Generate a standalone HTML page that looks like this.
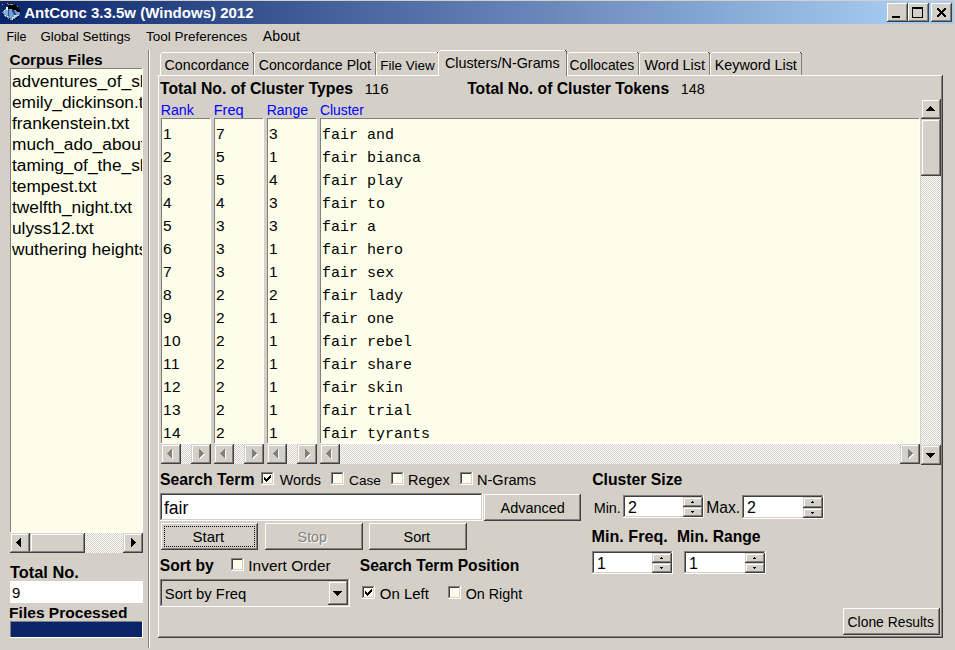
<!DOCTYPE html><html><head><meta charset="utf-8"><style>
html,body{margin:0;padding:0;}
body{width:955px;height:650px;position:relative;overflow:hidden;background:#d4d0c8;}
body div{position:absolute;}
</style></head><body>
<div style="left:0px;top:1px;width:954px;height:23px;background:linear-gradient(to right, #0a246a 0px, #a6caf0 900px)"></div>
<svg style="position:absolute;left:0px;top:0px" width="24" height="24" viewBox="0 0 24 24" shape-rendering="crispEdges">
<polygon points="2,12 6,9 10,9 14,10 19,11 20,13 20,15 16,17 13,20 11,20 6,17 2,14" fill="#6c9bd6"/>
<polygon points="3,12 6,10 9,10 9,16 6,15" fill="#87aee0"/>
<path d="M8,9h1v7h-1z M12,10h2v1h1v2h1v2h-2v-1h-1v-2h-1z" fill="#2c4a80"/>
<path d="M14,15h5v1h-2v1h-2v1h-2v1h-1v-2h2z" fill="#d8d0b8"/>
<polygon points="10,5 14,5 17,6 19,8 20,12 18,12 15,10 11,9 8,9 7,7" fill="#000"/>
<rect x="6" y="7" width="2" height="3" fill="#f0f0f0"/>
<path d="M2,4h1v1h-1z M7,3h1v1h-1z M8,4h1v1h-1z M10,4h3v1h-3z M17,6h1v1h-1z" fill="#a89870"/>
<path d="M5,4h1v1h-1z M2,13h1v1h-1z M3,14h1v1h-1z M9,18h1v1h-1z M13,19h1v1h-1z M18,17h1v1h-1z M20,12h1v1h-1z M16,18h1v1h-1z M6,17h1v1h-1z" fill="#000"/>
<path d="M5,15h1v1h-1z M7,16h1v1h-1z M12,19h1v1h-1z M4,10h1v1h-1z" fill="#e8eef8"/>
</svg>
<div style="left:24.25px;top:-2px;font-family:'Liberation Sans', sans-serif;font-weight:bold;font-size:15.02px;line-height:30px;color:#fff;white-space:nowrap;">AntConc 3.3.5w (Windows) 2012</div>
<div style="left:887px;top:3px;width:21px;height:19px;background:#d4d0c8;box-shadow:inset -1px -1px #404040, inset 1px 1px #ffffff, inset -2px -2px #808080, inset 2px 2px #d4d0c8"></div>
<div style="left:892px;top:16px;width:8px;height:2px;background:#000"></div>
<div style="left:908px;top:3px;width:21px;height:19px;background:#d4d0c8;box-shadow:inset -1px -1px #404040, inset 1px 1px #ffffff, inset -2px -2px #808080, inset 2px 2px #d4d0c8"></div>
<div style="left:912px;top:7px;width:11px;height:11px;border:1px solid #000;border-top-width:2px;box-sizing:border-box"></div>
<div style="left:931px;top:3px;width:21px;height:19px;background:#d4d0c8;box-shadow:inset -1px -1px #404040, inset 1px 1px #ffffff, inset -2px -2px #808080, inset 2px 2px #d4d0c8"></div>
<div style="left:937px;top:8px;width:1px;height:1px;background:#000"></div>
<div style="left:938px;top:8px;width:1px;height:1px;background:#000"></div>
<div style="left:944px;top:8px;width:1px;height:1px;background:#000"></div>
<div style="left:945px;top:8px;width:1px;height:1px;background:#000"></div>
<div style="left:937px;top:9px;width:1px;height:1px;background:#000"></div>
<div style="left:938px;top:9px;width:1px;height:1px;background:#000"></div>
<div style="left:939px;top:9px;width:1px;height:1px;background:#000"></div>
<div style="left:943px;top:9px;width:1px;height:1px;background:#000"></div>
<div style="left:944px;top:9px;width:1px;height:1px;background:#000"></div>
<div style="left:945px;top:9px;width:1px;height:1px;background:#000"></div>
<div style="left:938px;top:10px;width:1px;height:1px;background:#000"></div>
<div style="left:939px;top:10px;width:1px;height:1px;background:#000"></div>
<div style="left:940px;top:10px;width:1px;height:1px;background:#000"></div>
<div style="left:942px;top:10px;width:1px;height:1px;background:#000"></div>
<div style="left:943px;top:10px;width:1px;height:1px;background:#000"></div>
<div style="left:944px;top:10px;width:1px;height:1px;background:#000"></div>
<div style="left:939px;top:11px;width:1px;height:1px;background:#000"></div>
<div style="left:940px;top:11px;width:1px;height:1px;background:#000"></div>
<div style="left:941px;top:11px;width:1px;height:1px;background:#000"></div>
<div style="left:942px;top:11px;width:1px;height:1px;background:#000"></div>
<div style="left:943px;top:11px;width:1px;height:1px;background:#000"></div>
<div style="left:940px;top:12px;width:1px;height:1px;background:#000"></div>
<div style="left:941px;top:12px;width:1px;height:1px;background:#000"></div>
<div style="left:942px;top:12px;width:1px;height:1px;background:#000"></div>
<div style="left:939px;top:13px;width:1px;height:1px;background:#000"></div>
<div style="left:940px;top:13px;width:1px;height:1px;background:#000"></div>
<div style="left:941px;top:13px;width:1px;height:1px;background:#000"></div>
<div style="left:942px;top:13px;width:1px;height:1px;background:#000"></div>
<div style="left:943px;top:13px;width:1px;height:1px;background:#000"></div>
<div style="left:938px;top:14px;width:1px;height:1px;background:#000"></div>
<div style="left:939px;top:14px;width:1px;height:1px;background:#000"></div>
<div style="left:940px;top:14px;width:1px;height:1px;background:#000"></div>
<div style="left:942px;top:14px;width:1px;height:1px;background:#000"></div>
<div style="left:943px;top:14px;width:1px;height:1px;background:#000"></div>
<div style="left:944px;top:14px;width:1px;height:1px;background:#000"></div>
<div style="left:937px;top:15px;width:1px;height:1px;background:#000"></div>
<div style="left:938px;top:15px;width:1px;height:1px;background:#000"></div>
<div style="left:939px;top:15px;width:1px;height:1px;background:#000"></div>
<div style="left:943px;top:15px;width:1px;height:1px;background:#000"></div>
<div style="left:944px;top:15px;width:1px;height:1px;background:#000"></div>
<div style="left:945px;top:15px;width:1px;height:1px;background:#000"></div>
<div style="left:937px;top:16px;width:1px;height:1px;background:#000"></div>
<div style="left:938px;top:16px;width:1px;height:1px;background:#000"></div>
<div style="left:944px;top:16px;width:1px;height:1px;background:#000"></div>
<div style="left:945px;top:16px;width:1px;height:1px;background:#000"></div>
<div style="left:6.51px;top:22px;font-family:'Liberation Sans', sans-serif;font-weight:normal;font-size:12.42px;line-height:30px;color:#000;white-space:nowrap;">File</div>
<div style="left:40.44px;top:22px;font-family:'Liberation Sans', sans-serif;font-weight:normal;font-size:13.27px;line-height:30px;color:#000;white-space:nowrap;">Global Settings</div>
<div style="left:145.93px;top:22px;font-family:'Liberation Sans', sans-serif;font-weight:normal;font-size:13.5px;line-height:30px;color:#000;white-space:nowrap;">Tool Preferences</div>
<div style="left:262.8px;top:21px;font-family:'Liberation Sans', sans-serif;font-weight:normal;font-size:14.18px;line-height:30px;color:#000;white-space:nowrap;">About</div>
<div style="left:9.59px;top:45px;font-family:'Liberation Sans', sans-serif;font-weight:bold;font-size:15.35px;line-height:30px;color:#000;white-space:nowrap;">Corpus Files</div>
<div style="left:10px;top:68px;width:133px;height:465px;background:#fcfee9;box-shadow:inset -1px -1px #ffffff, inset 1px 1px #808080"></div>
<div style="left:11px;top:69px;width:131px;height:463px;overflow:hidden">
<div style="left:1px;top:-3px;font-family:'Liberation Sans', sans-serif;font-weight:normal;font-size:17.3px;line-height:30px;color:#000;white-space:nowrap;">adventures_of_sherlock_holmes.txt</div>
<div style="left:1px;top:18px;font-family:'Liberation Sans', sans-serif;font-weight:normal;font-size:17.3px;line-height:30px;color:#000;white-space:nowrap;">emily_dickinson.txt</div>
<div style="left:1px;top:39px;font-family:'Liberation Sans', sans-serif;font-weight:normal;font-size:17.3px;line-height:30px;color:#000;white-space:nowrap;">frankenstein.txt</div>
<div style="left:1px;top:60px;font-family:'Liberation Sans', sans-serif;font-weight:normal;font-size:17.3px;line-height:30px;color:#000;white-space:nowrap;">much_ado_about_nothing.txt</div>
<div style="left:1px;top:81px;font-family:'Liberation Sans', sans-serif;font-weight:normal;font-size:17.3px;line-height:30px;color:#000;white-space:nowrap;">taming_of_the_shrew.txt</div>
<div style="left:1px;top:102px;font-family:'Liberation Sans', sans-serif;font-weight:normal;font-size:17.3px;line-height:30px;color:#000;white-space:nowrap;">tempest.txt</div>
<div style="left:1px;top:123px;font-family:'Liberation Sans', sans-serif;font-weight:normal;font-size:17.3px;line-height:30px;color:#000;white-space:nowrap;">twelfth_night.txt</div>
<div style="left:1px;top:144px;font-family:'Liberation Sans', sans-serif;font-weight:normal;font-size:17.3px;line-height:30px;color:#000;white-space:nowrap;">ulyss12.txt</div>
<div style="left:1px;top:165px;font-family:'Liberation Sans', sans-serif;font-weight:normal;font-size:17.3px;line-height:30px;color:#000;white-space:nowrap;">wuthering heights.txt</div>
</div>
<div style="left:10px;top:533px;width:20px;height:20px;background:#d4d0c8;box-shadow:inset -1px -1px #404040, inset 1px 1px #d4d0c8, inset -2px -2px #808080, inset 2px 2px #ffffff"></div>
<div style="left:16px;top:542px;width:1px;height:1px;background:#000"></div>
<div style="left:17px;top:541px;width:1px;height:3px;background:#000"></div>
<div style="left:18px;top:540px;width:1px;height:5px;background:#000"></div>
<div style="left:19px;top:539px;width:1px;height:7px;background:#000"></div>
<div style="left:20px;top:538px;width:1px;height:9px;background:#000"></div>
<div style="left:30px;top:533px;width:55px;height:20px;background:#d4d0c8;box-shadow:inset -1px -1px #404040, inset 1px 1px #d4d0c8, inset -2px -2px #808080, inset 2px 2px #ffffff"></div>
<div style="left:85px;top:533px;width:38px;height:20px;background-color:#d4d0c8;background-image:repeating-conic-gradient(#ffffff 0 25%, #d4d0c8 0 50%);background-size:2px 2px"></div>
<div style="left:123px;top:533px;width:20px;height:20px;background:#d4d0c8;box-shadow:inset -1px -1px #404040, inset 1px 1px #d4d0c8, inset -2px -2px #808080, inset 2px 2px #ffffff"></div>
<div style="left:131px;top:538px;width:1px;height:9px;background:#000"></div>
<div style="left:132px;top:539px;width:1px;height:7px;background:#000"></div>
<div style="left:133px;top:540px;width:1px;height:5px;background:#000"></div>
<div style="left:134px;top:541px;width:1px;height:3px;background:#000"></div>
<div style="left:135px;top:542px;width:1px;height:1px;background:#000"></div>
<div style="left:10.04px;top:557px;font-family:'Liberation Sans', sans-serif;font-weight:bold;font-size:16.36px;line-height:30px;color:#000;white-space:nowrap;">Total No.</div>
<div style="left:10px;top:581px;width:133px;height:22px;background:#fff"></div>
<div style="left:12px;top:578px;font-family:'Liberation Sans', sans-serif;font-weight:normal;font-size:15px;line-height:30px;color:#000;white-space:nowrap;">9</div>
<div style="left:9.11px;top:598px;font-family:'Liberation Sans', sans-serif;font-weight:bold;font-size:15.55px;line-height:30px;color:#000;white-space:nowrap;">Files Processed</div>
<div style="left:10px;top:621px;width:133px;height:17px;background:#0a246a;box-shadow:inset -1px -1px #ffffff, inset 1px 1px #808080"></div>
<div style="left:148px;top:50px;width:1px;height:598px;background:#808080"></div>
<div style="left:149px;top:50px;width:1px;height:598px;background:#ffffff"></div>
<div style="left:158px;top:75px;width:785px;height:563px;background:#d4d0c8;box-shadow:inset -1px -1px #404040, inset 1px 1px #ffffff, inset -2px -2px #808080, inset 2px 2px #d4d0c8"></div>
<div style="left:160px;top:52px;width:94px;height:23px;background:#d4d0c8"></div>
<div style="left:160px;top:54px;width:1px;height:21px;background:#ffffff"></div>
<div style="left:161px;top:53px;width:1px;height:1px;background:#ffffff"></div>
<div style="left:162px;top:52px;width:90px;height:1px;background:#ffffff"></div>
<div style="left:252px;top:52px;width:1px;height:1px;background:#404040"></div>
<div style="left:253px;top:53px;width:1px;height:1px;background:#404040"></div>
<div style="left:253px;top:54px;width:1px;height:21px;background:#808080"></div>
<div style="left:164.59px;top:50px;font-family:'Liberation Sans', sans-serif;font-weight:normal;font-size:14.24px;line-height:30px;color:#000;white-space:nowrap;">Concordance</div>
<div style="left:254px;top:52px;width:122px;height:23px;background:#d4d0c8"></div>
<div style="left:254px;top:54px;width:1px;height:21px;background:#ffffff"></div>
<div style="left:255px;top:53px;width:1px;height:1px;background:#ffffff"></div>
<div style="left:256px;top:52px;width:118px;height:1px;background:#ffffff"></div>
<div style="left:374px;top:52px;width:1px;height:1px;background:#404040"></div>
<div style="left:375px;top:53px;width:1px;height:1px;background:#404040"></div>
<div style="left:375px;top:54px;width:1px;height:21px;background:#808080"></div>
<div style="left:258.69px;top:50px;font-family:'Liberation Sans', sans-serif;font-weight:normal;font-size:14.14px;line-height:30px;color:#000;white-space:nowrap;">Concordance Plot</div>
<div style="left:376px;top:52px;width:63px;height:23px;background:#d4d0c8"></div>
<div style="left:376px;top:54px;width:1px;height:21px;background:#ffffff"></div>
<div style="left:377px;top:53px;width:1px;height:1px;background:#ffffff"></div>
<div style="left:378px;top:52px;width:59px;height:1px;background:#ffffff"></div>
<div style="left:437px;top:52px;width:1px;height:1px;background:#404040"></div>
<div style="left:438px;top:53px;width:1px;height:1px;background:#404040"></div>
<div style="left:438px;top:54px;width:1px;height:21px;background:#808080"></div>
<div style="left:380.22px;top:51px;font-family:'Liberation Sans', sans-serif;font-weight:normal;font-size:13.48px;line-height:30px;color:#000;white-space:nowrap;">File View</div>
<div style="left:567px;top:52px;width:72px;height:23px;background:#d4d0c8"></div>
<div style="left:567px;top:54px;width:1px;height:21px;background:#ffffff"></div>
<div style="left:568px;top:53px;width:1px;height:1px;background:#ffffff"></div>
<div style="left:569px;top:52px;width:68px;height:1px;background:#ffffff"></div>
<div style="left:637px;top:52px;width:1px;height:1px;background:#404040"></div>
<div style="left:638px;top:53px;width:1px;height:1px;background:#404040"></div>
<div style="left:638px;top:54px;width:1px;height:21px;background:#808080"></div>
<div style="left:569.51px;top:50px;font-family:'Liberation Sans', sans-serif;font-weight:normal;font-size:13.84px;line-height:30px;color:#000;white-space:nowrap;">Collocates</div>
<div style="left:639px;top:52px;width:71px;height:23px;background:#d4d0c8"></div>
<div style="left:639px;top:54px;width:1px;height:21px;background:#ffffff"></div>
<div style="left:640px;top:53px;width:1px;height:1px;background:#ffffff"></div>
<div style="left:641px;top:52px;width:67px;height:1px;background:#ffffff"></div>
<div style="left:708px;top:52px;width:1px;height:1px;background:#404040"></div>
<div style="left:709px;top:53px;width:1px;height:1px;background:#404040"></div>
<div style="left:709px;top:54px;width:1px;height:21px;background:#808080"></div>
<div style="left:644.56px;top:50px;font-family:'Liberation Sans', sans-serif;font-weight:normal;font-size:14.39px;line-height:30px;color:#000;white-space:nowrap;">Word List</div>
<div style="left:710px;top:52px;width:92px;height:23px;background:#d4d0c8"></div>
<div style="left:710px;top:54px;width:1px;height:21px;background:#ffffff"></div>
<div style="left:711px;top:53px;width:1px;height:1px;background:#ffffff"></div>
<div style="left:712px;top:52px;width:88px;height:1px;background:#ffffff"></div>
<div style="left:800px;top:52px;width:1px;height:1px;background:#404040"></div>
<div style="left:801px;top:53px;width:1px;height:1px;background:#404040"></div>
<div style="left:801px;top:54px;width:1px;height:21px;background:#808080"></div>
<div style="left:714.65px;top:50px;font-family:'Liberation Sans', sans-serif;font-weight:normal;font-size:14.36px;line-height:30px;color:#000;white-space:nowrap;">Keyword List</div>
<div style="left:438px;top:50px;width:129px;height:26px;background:#d4d0c8"></div>
<div style="left:438px;top:52px;width:1px;height:24px;background:#ffffff"></div>
<div style="left:439px;top:51px;width:1px;height:1px;background:#ffffff"></div>
<div style="left:440px;top:50px;width:125px;height:1px;background:#ffffff"></div>
<div style="left:565px;top:50px;width:1px;height:1px;background:#404040"></div>
<div style="left:566px;top:51px;width:1px;height:1px;background:#404040"></div>
<div style="left:566px;top:52px;width:1px;height:24px;background:#808080"></div>
<div style="left:444.88px;top:48px;font-family:'Liberation Sans', sans-serif;font-weight:normal;font-size:14.37px;line-height:30px;color:#000;white-space:nowrap;">Clusters/N-Grams</div>
<div style="left:160.04px;top:74px;font-family:'Liberation Sans', sans-serif;font-weight:bold;font-size:15.78px;line-height:30px;color:#000;white-space:nowrap;">Total No. of Cluster Types</div>
<div style="left:364.49px;top:74px;font-family:'Liberation Sans', sans-serif;font-weight:normal;font-size:15.17px;line-height:30px;color:#000;white-space:nowrap;">116</div>
<div style="left:467.14px;top:74px;font-family:'Liberation Sans', sans-serif;font-weight:bold;font-size:15.73px;line-height:30px;color:#000;white-space:nowrap;">Total No. of Cluster Tokens</div>
<div style="left:680.65px;top:74px;font-family:'Liberation Sans', sans-serif;font-weight:normal;font-size:14.39px;line-height:30px;color:#000;white-space:nowrap;">148</div>
<div style="left:160.67px;top:95px;font-family:'Liberation Sans', sans-serif;font-weight:normal;font-size:14.18px;line-height:30px;color:#0000ff;white-space:nowrap;">Rank</div>
<div style="left:213.74px;top:95px;font-family:'Liberation Sans', sans-serif;font-weight:normal;font-size:14.55px;line-height:30px;color:#0000ff;white-space:nowrap;">Freq</div>
<div style="left:266.68px;top:95px;font-family:'Liberation Sans', sans-serif;font-weight:normal;font-size:14.04px;line-height:30px;color:#0000ff;white-space:nowrap;">Range</div>
<div style="left:319.91px;top:95px;font-family:'Liberation Sans', sans-serif;font-weight:normal;font-size:13.87px;line-height:30px;color:#0000ff;white-space:nowrap;">Cluster</div>
<div style="left:161px;top:118px;width:50px;height:326px;background:#fcfee9;box-shadow:inset -1px -1px #ffffff, inset 1px 1px #808080"></div>
<div style="left:214px;top:118px;width:50px;height:326px;background:#fcfee9;box-shadow:inset -1px -1px #ffffff, inset 1px 1px #808080"></div>
<div style="left:267px;top:118px;width:50px;height:326px;background:#fcfee9;box-shadow:inset -1px -1px #ffffff, inset 1px 1px #808080"></div>
<div style="left:320px;top:118px;width:600px;height:326px;background:#fcfee9;box-shadow:inset -1px -1px #ffffff, inset 1px 1px #808080"></div>
<div style="left:163px;top:119px;font-family:'Liberation Sans', sans-serif;font-weight:normal;font-size:15.5px;line-height:30px;color:#000;white-space:nowrap;letter-spacing:0.5px">1</div>
<div style="left:216px;top:119px;font-family:'Liberation Sans', sans-serif;font-weight:normal;font-size:15.5px;line-height:30px;color:#000;white-space:nowrap;">7</div>
<div style="left:269px;top:119px;font-family:'Liberation Sans', sans-serif;font-weight:normal;font-size:15.5px;line-height:30px;color:#000;white-space:nowrap;">3</div>
<div style="left:322px;top:121px;font-family:'Liberation Mono', monospace;font-weight:normal;font-size:15px;line-height:30px;color:#000;white-space:nowrap;">fair and</div>
<div style="left:163px;top:142px;font-family:'Liberation Sans', sans-serif;font-weight:normal;font-size:15.5px;line-height:30px;color:#000;white-space:nowrap;letter-spacing:0.5px">2</div>
<div style="left:216px;top:142px;font-family:'Liberation Sans', sans-serif;font-weight:normal;font-size:15.5px;line-height:30px;color:#000;white-space:nowrap;">5</div>
<div style="left:269px;top:142px;font-family:'Liberation Sans', sans-serif;font-weight:normal;font-size:15.5px;line-height:30px;color:#000;white-space:nowrap;">1</div>
<div style="left:322px;top:144px;font-family:'Liberation Mono', monospace;font-weight:normal;font-size:15px;line-height:30px;color:#000;white-space:nowrap;">fair bianca</div>
<div style="left:163px;top:165px;font-family:'Liberation Sans', sans-serif;font-weight:normal;font-size:15.5px;line-height:30px;color:#000;white-space:nowrap;letter-spacing:0.5px">3</div>
<div style="left:216px;top:165px;font-family:'Liberation Sans', sans-serif;font-weight:normal;font-size:15.5px;line-height:30px;color:#000;white-space:nowrap;">5</div>
<div style="left:269px;top:165px;font-family:'Liberation Sans', sans-serif;font-weight:normal;font-size:15.5px;line-height:30px;color:#000;white-space:nowrap;">4</div>
<div style="left:322px;top:167px;font-family:'Liberation Mono', monospace;font-weight:normal;font-size:15px;line-height:30px;color:#000;white-space:nowrap;">fair play</div>
<div style="left:163px;top:188px;font-family:'Liberation Sans', sans-serif;font-weight:normal;font-size:15.5px;line-height:30px;color:#000;white-space:nowrap;letter-spacing:0.5px">4</div>
<div style="left:216px;top:188px;font-family:'Liberation Sans', sans-serif;font-weight:normal;font-size:15.5px;line-height:30px;color:#000;white-space:nowrap;">4</div>
<div style="left:269px;top:188px;font-family:'Liberation Sans', sans-serif;font-weight:normal;font-size:15.5px;line-height:30px;color:#000;white-space:nowrap;">3</div>
<div style="left:322px;top:190px;font-family:'Liberation Mono', monospace;font-weight:normal;font-size:15px;line-height:30px;color:#000;white-space:nowrap;">fair to</div>
<div style="left:163px;top:211px;font-family:'Liberation Sans', sans-serif;font-weight:normal;font-size:15.5px;line-height:30px;color:#000;white-space:nowrap;letter-spacing:0.5px">5</div>
<div style="left:216px;top:211px;font-family:'Liberation Sans', sans-serif;font-weight:normal;font-size:15.5px;line-height:30px;color:#000;white-space:nowrap;">3</div>
<div style="left:269px;top:211px;font-family:'Liberation Sans', sans-serif;font-weight:normal;font-size:15.5px;line-height:30px;color:#000;white-space:nowrap;">3</div>
<div style="left:322px;top:213px;font-family:'Liberation Mono', monospace;font-weight:normal;font-size:15px;line-height:30px;color:#000;white-space:nowrap;">fair a</div>
<div style="left:163px;top:234px;font-family:'Liberation Sans', sans-serif;font-weight:normal;font-size:15.5px;line-height:30px;color:#000;white-space:nowrap;letter-spacing:0.5px">6</div>
<div style="left:216px;top:234px;font-family:'Liberation Sans', sans-serif;font-weight:normal;font-size:15.5px;line-height:30px;color:#000;white-space:nowrap;">3</div>
<div style="left:269px;top:234px;font-family:'Liberation Sans', sans-serif;font-weight:normal;font-size:15.5px;line-height:30px;color:#000;white-space:nowrap;">1</div>
<div style="left:322px;top:236px;font-family:'Liberation Mono', monospace;font-weight:normal;font-size:15px;line-height:30px;color:#000;white-space:nowrap;">fair hero</div>
<div style="left:163px;top:257px;font-family:'Liberation Sans', sans-serif;font-weight:normal;font-size:15.5px;line-height:30px;color:#000;white-space:nowrap;letter-spacing:0.5px">7</div>
<div style="left:216px;top:257px;font-family:'Liberation Sans', sans-serif;font-weight:normal;font-size:15.5px;line-height:30px;color:#000;white-space:nowrap;">3</div>
<div style="left:269px;top:257px;font-family:'Liberation Sans', sans-serif;font-weight:normal;font-size:15.5px;line-height:30px;color:#000;white-space:nowrap;">1</div>
<div style="left:322px;top:259px;font-family:'Liberation Mono', monospace;font-weight:normal;font-size:15px;line-height:30px;color:#000;white-space:nowrap;">fair sex</div>
<div style="left:163px;top:280px;font-family:'Liberation Sans', sans-serif;font-weight:normal;font-size:15.5px;line-height:30px;color:#000;white-space:nowrap;letter-spacing:0.5px">8</div>
<div style="left:216px;top:280px;font-family:'Liberation Sans', sans-serif;font-weight:normal;font-size:15.5px;line-height:30px;color:#000;white-space:nowrap;">2</div>
<div style="left:269px;top:280px;font-family:'Liberation Sans', sans-serif;font-weight:normal;font-size:15.5px;line-height:30px;color:#000;white-space:nowrap;">2</div>
<div style="left:322px;top:282px;font-family:'Liberation Mono', monospace;font-weight:normal;font-size:15px;line-height:30px;color:#000;white-space:nowrap;">fair lady</div>
<div style="left:163px;top:303px;font-family:'Liberation Sans', sans-serif;font-weight:normal;font-size:15.5px;line-height:30px;color:#000;white-space:nowrap;letter-spacing:0.5px">9</div>
<div style="left:216px;top:303px;font-family:'Liberation Sans', sans-serif;font-weight:normal;font-size:15.5px;line-height:30px;color:#000;white-space:nowrap;">2</div>
<div style="left:269px;top:303px;font-family:'Liberation Sans', sans-serif;font-weight:normal;font-size:15.5px;line-height:30px;color:#000;white-space:nowrap;">1</div>
<div style="left:322px;top:305px;font-family:'Liberation Mono', monospace;font-weight:normal;font-size:15px;line-height:30px;color:#000;white-space:nowrap;">fair one</div>
<div style="left:163px;top:326px;font-family:'Liberation Sans', sans-serif;font-weight:normal;font-size:15.5px;line-height:30px;color:#000;white-space:nowrap;letter-spacing:0.5px">10</div>
<div style="left:216px;top:326px;font-family:'Liberation Sans', sans-serif;font-weight:normal;font-size:15.5px;line-height:30px;color:#000;white-space:nowrap;">2</div>
<div style="left:269px;top:326px;font-family:'Liberation Sans', sans-serif;font-weight:normal;font-size:15.5px;line-height:30px;color:#000;white-space:nowrap;">1</div>
<div style="left:322px;top:328px;font-family:'Liberation Mono', monospace;font-weight:normal;font-size:15px;line-height:30px;color:#000;white-space:nowrap;">fair rebel</div>
<div style="left:163px;top:349px;font-family:'Liberation Sans', sans-serif;font-weight:normal;font-size:15.5px;line-height:30px;color:#000;white-space:nowrap;letter-spacing:0.5px">11</div>
<div style="left:216px;top:349px;font-family:'Liberation Sans', sans-serif;font-weight:normal;font-size:15.5px;line-height:30px;color:#000;white-space:nowrap;">2</div>
<div style="left:269px;top:349px;font-family:'Liberation Sans', sans-serif;font-weight:normal;font-size:15.5px;line-height:30px;color:#000;white-space:nowrap;">1</div>
<div style="left:322px;top:351px;font-family:'Liberation Mono', monospace;font-weight:normal;font-size:15px;line-height:30px;color:#000;white-space:nowrap;">fair share</div>
<div style="left:163px;top:372px;font-family:'Liberation Sans', sans-serif;font-weight:normal;font-size:15.5px;line-height:30px;color:#000;white-space:nowrap;letter-spacing:0.5px">12</div>
<div style="left:216px;top:372px;font-family:'Liberation Sans', sans-serif;font-weight:normal;font-size:15.5px;line-height:30px;color:#000;white-space:nowrap;">2</div>
<div style="left:269px;top:372px;font-family:'Liberation Sans', sans-serif;font-weight:normal;font-size:15.5px;line-height:30px;color:#000;white-space:nowrap;">1</div>
<div style="left:322px;top:374px;font-family:'Liberation Mono', monospace;font-weight:normal;font-size:15px;line-height:30px;color:#000;white-space:nowrap;">fair skin</div>
<div style="left:163px;top:395px;font-family:'Liberation Sans', sans-serif;font-weight:normal;font-size:15.5px;line-height:30px;color:#000;white-space:nowrap;letter-spacing:0.5px">13</div>
<div style="left:216px;top:395px;font-family:'Liberation Sans', sans-serif;font-weight:normal;font-size:15.5px;line-height:30px;color:#000;white-space:nowrap;">2</div>
<div style="left:269px;top:395px;font-family:'Liberation Sans', sans-serif;font-weight:normal;font-size:15.5px;line-height:30px;color:#000;white-space:nowrap;">1</div>
<div style="left:322px;top:397px;font-family:'Liberation Mono', monospace;font-weight:normal;font-size:15px;line-height:30px;color:#000;white-space:nowrap;">fair trial</div>
<div style="left:163px;top:418px;font-family:'Liberation Sans', sans-serif;font-weight:normal;font-size:15.5px;line-height:30px;color:#000;white-space:nowrap;letter-spacing:0.5px">14</div>
<div style="left:216px;top:418px;font-family:'Liberation Sans', sans-serif;font-weight:normal;font-size:15.5px;line-height:30px;color:#000;white-space:nowrap;">2</div>
<div style="left:269px;top:418px;font-family:'Liberation Sans', sans-serif;font-weight:normal;font-size:15.5px;line-height:30px;color:#000;white-space:nowrap;">1</div>
<div style="left:322px;top:420px;font-family:'Liberation Mono', monospace;font-weight:normal;font-size:15px;line-height:30px;color:#000;white-space:nowrap;">fair tyrants</div>
<div style="left:161px;top:444px;width:20px;height:20px;background:#d4d0c8;box-shadow:inset -1px -1px #404040, inset 1px 1px #d4d0c8, inset -2px -2px #808080, inset 2px 2px #ffffff"></div>
<div style="left:168px;top:454px;width:1px;height:1px;background:#ffffff"></div>
<div style="left:169px;top:453px;width:1px;height:3px;background:#ffffff"></div>
<div style="left:170px;top:452px;width:1px;height:5px;background:#ffffff"></div>
<div style="left:171px;top:451px;width:1px;height:7px;background:#ffffff"></div>
<div style="left:172px;top:450px;width:1px;height:9px;background:#ffffff"></div>
<div style="left:167px;top:453px;width:1px;height:1px;background:#808080"></div>
<div style="left:168px;top:452px;width:1px;height:3px;background:#808080"></div>
<div style="left:169px;top:451px;width:1px;height:5px;background:#808080"></div>
<div style="left:170px;top:450px;width:1px;height:7px;background:#808080"></div>
<div style="left:171px;top:449px;width:1px;height:9px;background:#808080"></div>
<div style="left:181px;top:444px;width:10px;height:20px;background-color:#d4d0c8;background-image:repeating-conic-gradient(#ffffff 0 25%, #d4d0c8 0 50%);background-size:2px 2px"></div>
<div style="left:191px;top:444px;width:20px;height:20px;background:#d4d0c8;box-shadow:inset -1px -1px #404040, inset 1px 1px #d4d0c8, inset -2px -2px #808080, inset 2px 2px #ffffff"></div>
<div style="left:200px;top:450px;width:1px;height:9px;background:#ffffff"></div>
<div style="left:201px;top:451px;width:1px;height:7px;background:#ffffff"></div>
<div style="left:202px;top:452px;width:1px;height:5px;background:#ffffff"></div>
<div style="left:203px;top:453px;width:1px;height:3px;background:#ffffff"></div>
<div style="left:204px;top:454px;width:1px;height:1px;background:#ffffff"></div>
<div style="left:199px;top:449px;width:1px;height:9px;background:#808080"></div>
<div style="left:200px;top:450px;width:1px;height:7px;background:#808080"></div>
<div style="left:201px;top:451px;width:1px;height:5px;background:#808080"></div>
<div style="left:202px;top:452px;width:1px;height:3px;background:#808080"></div>
<div style="left:203px;top:453px;width:1px;height:1px;background:#808080"></div>
<div style="left:214px;top:444px;width:20px;height:20px;background:#d4d0c8;box-shadow:inset -1px -1px #404040, inset 1px 1px #d4d0c8, inset -2px -2px #808080, inset 2px 2px #ffffff"></div>
<div style="left:221px;top:454px;width:1px;height:1px;background:#ffffff"></div>
<div style="left:222px;top:453px;width:1px;height:3px;background:#ffffff"></div>
<div style="left:223px;top:452px;width:1px;height:5px;background:#ffffff"></div>
<div style="left:224px;top:451px;width:1px;height:7px;background:#ffffff"></div>
<div style="left:225px;top:450px;width:1px;height:9px;background:#ffffff"></div>
<div style="left:220px;top:453px;width:1px;height:1px;background:#808080"></div>
<div style="left:221px;top:452px;width:1px;height:3px;background:#808080"></div>
<div style="left:222px;top:451px;width:1px;height:5px;background:#808080"></div>
<div style="left:223px;top:450px;width:1px;height:7px;background:#808080"></div>
<div style="left:224px;top:449px;width:1px;height:9px;background:#808080"></div>
<div style="left:234px;top:444px;width:10px;height:20px;background-color:#d4d0c8;background-image:repeating-conic-gradient(#ffffff 0 25%, #d4d0c8 0 50%);background-size:2px 2px"></div>
<div style="left:244px;top:444px;width:20px;height:20px;background:#d4d0c8;box-shadow:inset -1px -1px #404040, inset 1px 1px #d4d0c8, inset -2px -2px #808080, inset 2px 2px #ffffff"></div>
<div style="left:253px;top:450px;width:1px;height:9px;background:#ffffff"></div>
<div style="left:254px;top:451px;width:1px;height:7px;background:#ffffff"></div>
<div style="left:255px;top:452px;width:1px;height:5px;background:#ffffff"></div>
<div style="left:256px;top:453px;width:1px;height:3px;background:#ffffff"></div>
<div style="left:257px;top:454px;width:1px;height:1px;background:#ffffff"></div>
<div style="left:252px;top:449px;width:1px;height:9px;background:#808080"></div>
<div style="left:253px;top:450px;width:1px;height:7px;background:#808080"></div>
<div style="left:254px;top:451px;width:1px;height:5px;background:#808080"></div>
<div style="left:255px;top:452px;width:1px;height:3px;background:#808080"></div>
<div style="left:256px;top:453px;width:1px;height:1px;background:#808080"></div>
<div style="left:267px;top:444px;width:20px;height:20px;background:#d4d0c8;box-shadow:inset -1px -1px #404040, inset 1px 1px #d4d0c8, inset -2px -2px #808080, inset 2px 2px #ffffff"></div>
<div style="left:274px;top:454px;width:1px;height:1px;background:#ffffff"></div>
<div style="left:275px;top:453px;width:1px;height:3px;background:#ffffff"></div>
<div style="left:276px;top:452px;width:1px;height:5px;background:#ffffff"></div>
<div style="left:277px;top:451px;width:1px;height:7px;background:#ffffff"></div>
<div style="left:278px;top:450px;width:1px;height:9px;background:#ffffff"></div>
<div style="left:273px;top:453px;width:1px;height:1px;background:#808080"></div>
<div style="left:274px;top:452px;width:1px;height:3px;background:#808080"></div>
<div style="left:275px;top:451px;width:1px;height:5px;background:#808080"></div>
<div style="left:276px;top:450px;width:1px;height:7px;background:#808080"></div>
<div style="left:277px;top:449px;width:1px;height:9px;background:#808080"></div>
<div style="left:287px;top:444px;width:10px;height:20px;background-color:#d4d0c8;background-image:repeating-conic-gradient(#ffffff 0 25%, #d4d0c8 0 50%);background-size:2px 2px"></div>
<div style="left:297px;top:444px;width:20px;height:20px;background:#d4d0c8;box-shadow:inset -1px -1px #404040, inset 1px 1px #d4d0c8, inset -2px -2px #808080, inset 2px 2px #ffffff"></div>
<div style="left:306px;top:450px;width:1px;height:9px;background:#ffffff"></div>
<div style="left:307px;top:451px;width:1px;height:7px;background:#ffffff"></div>
<div style="left:308px;top:452px;width:1px;height:5px;background:#ffffff"></div>
<div style="left:309px;top:453px;width:1px;height:3px;background:#ffffff"></div>
<div style="left:310px;top:454px;width:1px;height:1px;background:#ffffff"></div>
<div style="left:305px;top:449px;width:1px;height:9px;background:#808080"></div>
<div style="left:306px;top:450px;width:1px;height:7px;background:#808080"></div>
<div style="left:307px;top:451px;width:1px;height:5px;background:#808080"></div>
<div style="left:308px;top:452px;width:1px;height:3px;background:#808080"></div>
<div style="left:309px;top:453px;width:1px;height:1px;background:#808080"></div>
<div style="left:320px;top:444px;width:20px;height:20px;background:#d4d0c8;box-shadow:inset -1px -1px #404040, inset 1px 1px #d4d0c8, inset -2px -2px #808080, inset 2px 2px #ffffff"></div>
<div style="left:327px;top:454px;width:1px;height:1px;background:#ffffff"></div>
<div style="left:328px;top:453px;width:1px;height:3px;background:#ffffff"></div>
<div style="left:329px;top:452px;width:1px;height:5px;background:#ffffff"></div>
<div style="left:330px;top:451px;width:1px;height:7px;background:#ffffff"></div>
<div style="left:331px;top:450px;width:1px;height:9px;background:#ffffff"></div>
<div style="left:326px;top:453px;width:1px;height:1px;background:#808080"></div>
<div style="left:327px;top:452px;width:1px;height:3px;background:#808080"></div>
<div style="left:328px;top:451px;width:1px;height:5px;background:#808080"></div>
<div style="left:329px;top:450px;width:1px;height:7px;background:#808080"></div>
<div style="left:330px;top:449px;width:1px;height:9px;background:#808080"></div>
<div style="left:340px;top:444px;width:560px;height:20px;background-color:#d4d0c8;background-image:repeating-conic-gradient(#ffffff 0 25%, #d4d0c8 0 50%);background-size:2px 2px"></div>
<div style="left:900px;top:444px;width:20px;height:20px;background:#d4d0c8;box-shadow:inset -1px -1px #404040, inset 1px 1px #d4d0c8, inset -2px -2px #808080, inset 2px 2px #ffffff"></div>
<div style="left:909px;top:450px;width:1px;height:9px;background:#ffffff"></div>
<div style="left:910px;top:451px;width:1px;height:7px;background:#ffffff"></div>
<div style="left:911px;top:452px;width:1px;height:5px;background:#ffffff"></div>
<div style="left:912px;top:453px;width:1px;height:3px;background:#ffffff"></div>
<div style="left:913px;top:454px;width:1px;height:1px;background:#ffffff"></div>
<div style="left:908px;top:449px;width:1px;height:9px;background:#808080"></div>
<div style="left:909px;top:450px;width:1px;height:7px;background:#808080"></div>
<div style="left:910px;top:451px;width:1px;height:5px;background:#808080"></div>
<div style="left:911px;top:452px;width:1px;height:3px;background:#808080"></div>
<div style="left:912px;top:453px;width:1px;height:1px;background:#808080"></div>
<div style="left:921px;top:119px;width:20px;height:326px;background-color:#d4d0c8;background-image:repeating-conic-gradient(#ffffff 0 25%, #d4d0c8 0 50%);background-size:2px 2px"></div>
<div style="left:921px;top:99px;width:20px;height:20px;background:#d4d0c8;box-shadow:inset -1px -1px #404040, inset 1px 1px #d4d0c8, inset -2px -2px #808080, inset 2px 2px #ffffff"></div>
<div style="left:930px;top:106px;width:1px;height:1px;background:#000"></div>
<div style="left:929px;top:107px;width:3px;height:1px;background:#000"></div>
<div style="left:928px;top:108px;width:5px;height:1px;background:#000"></div>
<div style="left:927px;top:109px;width:7px;height:1px;background:#000"></div>
<div style="left:926px;top:110px;width:9px;height:1px;background:#000"></div>
<div style="left:921px;top:119px;width:20px;height:57px;background:#d4d0c8;box-shadow:inset -1px -1px #404040, inset 1px 1px #d4d0c8, inset -2px -2px #808080, inset 2px 2px #ffffff"></div>
<div style="left:921px;top:445px;width:20px;height:20px;background:#d4d0c8;box-shadow:inset -1px -1px #404040, inset 1px 1px #d4d0c8, inset -2px -2px #808080, inset 2px 2px #ffffff"></div>
<div style="left:926px;top:453px;width:9px;height:1px;background:#000"></div>
<div style="left:927px;top:454px;width:7px;height:1px;background:#000"></div>
<div style="left:928px;top:455px;width:5px;height:1px;background:#000"></div>
<div style="left:929px;top:456px;width:3px;height:1px;background:#000"></div>
<div style="left:930px;top:457px;width:1px;height:1px;background:#000"></div>
<div style="left:160.03px;top:465px;font-family:'Liberation Sans', sans-serif;font-weight:bold;font-size:15.79px;line-height:30px;color:#000;white-space:nowrap;">Search Term</div>
<div style="left:261px;top:472px;width:13px;height:13px;background:#fcfee9;box-shadow:inset -1px -1px #ffffff, inset 1px 1px #808080, inset -2px -2px #d4d0c8, inset 2px 2px #404040"></div>
<div style="left:270px;top:475px;width:1px;height:1px;background:#000"></div>
<div style="left:269px;top:476px;width:1px;height:1px;background:#000"></div>
<div style="left:270px;top:476px;width:1px;height:1px;background:#000"></div>
<div style="left:264px;top:477px;width:1px;height:1px;background:#000"></div>
<div style="left:268px;top:477px;width:1px;height:1px;background:#000"></div>
<div style="left:269px;top:477px;width:1px;height:1px;background:#000"></div>
<div style="left:270px;top:477px;width:1px;height:1px;background:#000"></div>
<div style="left:264px;top:478px;width:1px;height:1px;background:#000"></div>
<div style="left:265px;top:478px;width:1px;height:1px;background:#000"></div>
<div style="left:267px;top:478px;width:1px;height:1px;background:#000"></div>
<div style="left:268px;top:478px;width:1px;height:1px;background:#000"></div>
<div style="left:269px;top:478px;width:1px;height:1px;background:#000"></div>
<div style="left:264px;top:479px;width:1px;height:1px;background:#000"></div>
<div style="left:265px;top:479px;width:1px;height:1px;background:#000"></div>
<div style="left:266px;top:479px;width:1px;height:1px;background:#000"></div>
<div style="left:267px;top:479px;width:1px;height:1px;background:#000"></div>
<div style="left:268px;top:479px;width:1px;height:1px;background:#000"></div>
<div style="left:265px;top:480px;width:1px;height:1px;background:#000"></div>
<div style="left:266px;top:480px;width:1px;height:1px;background:#000"></div>
<div style="left:267px;top:480px;width:1px;height:1px;background:#000"></div>
<div style="left:266px;top:481px;width:1px;height:1px;background:#000"></div>
<div style="left:279.66px;top:465px;font-family:'Liberation Sans', sans-serif;font-weight:normal;font-size:14.4px;line-height:30px;color:#000;white-space:nowrap;">Words</div>
<div style="left:331px;top:472px;width:13px;height:13px;background:#fcfee9;box-shadow:inset -1px -1px #ffffff, inset 1px 1px #808080, inset -2px -2px #d4d0c8, inset 2px 2px #404040"></div>
<div style="left:349.12px;top:466px;font-family:'Liberation Sans', sans-serif;font-weight:normal;font-size:13.62px;line-height:30px;color:#000;white-space:nowrap;">Case</div>
<div style="left:391px;top:472px;width:13px;height:13px;background:#fcfee9;box-shadow:inset -1px -1px #ffffff, inset 1px 1px #808080, inset -2px -2px #d4d0c8, inset 2px 2px #404040"></div>
<div style="left:408.04px;top:465px;font-family:'Liberation Sans', sans-serif;font-weight:normal;font-size:14.46px;line-height:30px;color:#000;white-space:nowrap;">Regex</div>
<div style="left:460px;top:472px;width:13px;height:13px;background:#fcfee9;box-shadow:inset -1px -1px #ffffff, inset 1px 1px #808080, inset -2px -2px #d4d0c8, inset 2px 2px #404040"></div>
<div style="left:477.04px;top:465px;font-family:'Liberation Sans', sans-serif;font-weight:normal;font-size:14.52px;line-height:30px;color:#000;white-space:nowrap;">N-Grams</div>
<div style="left:160px;top:493px;width:323px;height:28px;background:#ffffff;box-shadow:inset -1px -1px #ffffff, inset 1px 1px #808080, inset -2px -2px #d4d0c8, inset 2px 2px #404040"></div>
<div style="left:163.92px;top:493px;font-family:'Liberation Sans', sans-serif;font-weight:normal;font-size:17.57px;line-height:30px;color:#000;white-space:nowrap;">fair</div>
<div style="left:484px;top:494px;width:97px;height:27px;background:#d4d0c8;box-shadow:inset -1px -1px #404040, inset 1px 1px #ffffff, inset -2px -2px #808080, inset 2px 2px #d4d0c8"></div>
<div style="left:500.6px;top:493px;font-family:'Liberation Sans', sans-serif;font-weight:normal;font-size:14.45px;line-height:30px;color:#000;white-space:nowrap;">Advanced</div>
<div style="left:161px;top:523px;width:97px;height:27px;background:#d4d0c8;box-shadow:inset -1px -1px #404040, inset 1px 1px #ffffff, inset -2px -2px #808080, inset 2px 2px #d4d0c8"></div>
<div style="left:164px;top:526px;width:91px;height:21px;border:1px dotted #000;box-sizing:border-box"></div>
<div style="left:192.55px;top:522px;font-family:'Liberation Sans', sans-serif;font-weight:normal;font-size:14.95px;line-height:30px;color:#000;white-space:nowrap;">Start</div>
<div style="left:265px;top:523px;width:98px;height:27px;background:#d4d0c8;box-shadow:inset -1px -1px #404040, inset 1px 1px #ffffff, inset -2px -2px #808080, inset 2px 2px #d4d0c8"></div>
<div style="left:298.58px;top:523px;font-family:'Liberation Sans', sans-serif;font-weight:normal;font-size:14.34px;line-height:30px;color:#fff;white-space:nowrap;">Stop</div>
<div style="left:297.58px;top:522px;font-family:'Liberation Sans', sans-serif;font-weight:normal;font-size:14.34px;line-height:30px;color:#808080;white-space:nowrap;">Stop</div>
<div style="left:369px;top:523px;width:98px;height:27px;background:#d4d0c8;box-shadow:inset -1px -1px #404040, inset 1px 1px #ffffff, inset -2px -2px #808080, inset 2px 2px #d4d0c8"></div>
<div style="left:403.58px;top:522px;font-family:'Liberation Sans', sans-serif;font-weight:normal;font-size:14.49px;line-height:30px;color:#000;white-space:nowrap;">Sort</div>
<div style="left:159.73px;top:551px;font-family:'Liberation Sans', sans-serif;font-weight:bold;font-size:15.66px;line-height:30px;color:#000;white-space:nowrap;">Sort by</div>
<div style="left:231px;top:558px;width:13px;height:13px;background:#fcfee9;box-shadow:inset -1px -1px #ffffff, inset 1px 1px #808080, inset -2px -2px #d4d0c8, inset 2px 2px #404040"></div>
<div style="left:248.31px;top:551px;font-family:'Liberation Sans', sans-serif;font-weight:normal;font-size:15.45px;line-height:30px;color:#000;white-space:nowrap;">Invert Order</div>
<div style="left:359.73px;top:551px;font-family:'Liberation Sans', sans-serif;font-weight:bold;font-size:15.65px;line-height:30px;color:#000;white-space:nowrap;">Search Term Position</div>
<div style="left:160px;top:579px;width:190px;height:28px;background:#d4d0c8;box-shadow:inset -1px -1px #ffffff, inset 1px 1px #808080, inset -2px -2px #d4d0c8, inset 2px 2px #404040"></div>
<div style="left:164.76px;top:579px;font-family:'Liberation Sans', sans-serif;font-weight:normal;font-size:14.84px;line-height:30px;color:#000;white-space:nowrap;">Sort by Freq</div>
<div style="left:328px;top:581px;width:20px;height:24px;background:#d4d0c8;box-shadow:inset -1px -1px #404040, inset 1px 1px #d4d0c8, inset -2px -2px #808080, inset 2px 2px #ffffff"></div>
<div style="left:333px;top:591px;width:9px;height:1px;background:#000"></div>
<div style="left:334px;top:592px;width:7px;height:1px;background:#000"></div>
<div style="left:335px;top:593px;width:5px;height:1px;background:#000"></div>
<div style="left:336px;top:594px;width:3px;height:1px;background:#000"></div>
<div style="left:337px;top:595px;width:1px;height:1px;background:#000"></div>
<div style="left:362px;top:586px;width:13px;height:13px;background:#fcfee9;box-shadow:inset -1px -1px #ffffff, inset 1px 1px #808080, inset -2px -2px #d4d0c8, inset 2px 2px #404040"></div>
<div style="left:371px;top:589px;width:1px;height:1px;background:#000"></div>
<div style="left:370px;top:590px;width:1px;height:1px;background:#000"></div>
<div style="left:371px;top:590px;width:1px;height:1px;background:#000"></div>
<div style="left:365px;top:591px;width:1px;height:1px;background:#000"></div>
<div style="left:369px;top:591px;width:1px;height:1px;background:#000"></div>
<div style="left:370px;top:591px;width:1px;height:1px;background:#000"></div>
<div style="left:371px;top:591px;width:1px;height:1px;background:#000"></div>
<div style="left:365px;top:592px;width:1px;height:1px;background:#000"></div>
<div style="left:366px;top:592px;width:1px;height:1px;background:#000"></div>
<div style="left:368px;top:592px;width:1px;height:1px;background:#000"></div>
<div style="left:369px;top:592px;width:1px;height:1px;background:#000"></div>
<div style="left:370px;top:592px;width:1px;height:1px;background:#000"></div>
<div style="left:365px;top:593px;width:1px;height:1px;background:#000"></div>
<div style="left:366px;top:593px;width:1px;height:1px;background:#000"></div>
<div style="left:367px;top:593px;width:1px;height:1px;background:#000"></div>
<div style="left:368px;top:593px;width:1px;height:1px;background:#000"></div>
<div style="left:369px;top:593px;width:1px;height:1px;background:#000"></div>
<div style="left:366px;top:594px;width:1px;height:1px;background:#000"></div>
<div style="left:367px;top:594px;width:1px;height:1px;background:#000"></div>
<div style="left:368px;top:594px;width:1px;height:1px;background:#000"></div>
<div style="left:367px;top:595px;width:1px;height:1px;background:#000"></div>
<div style="left:379.75px;top:579px;font-family:'Liberation Sans', sans-serif;font-weight:normal;font-size:14.97px;line-height:30px;color:#000;white-space:nowrap;">On Left</div>
<div style="left:448px;top:586px;width:13px;height:13px;background:#fcfee9;box-shadow:inset -1px -1px #ffffff, inset 1px 1px #808080, inset -2px -2px #d4d0c8, inset 2px 2px #404040"></div>
<div style="left:465.68px;top:579px;font-family:'Liberation Sans', sans-serif;font-weight:normal;font-size:14.32px;line-height:30px;color:#000;white-space:nowrap;">On Right</div>
<div style="left:592.17px;top:465px;font-family:'Liberation Sans', sans-serif;font-weight:bold;font-size:15.75px;line-height:30px;color:#000;white-space:nowrap;">Cluster Size</div>
<div style="left:593.65px;top:493px;font-family:'Liberation Sans', sans-serif;font-weight:normal;font-size:14.42px;line-height:30px;color:#000;white-space:nowrap;">Min.</div>
<div style="left:623px;top:495px;width:81px;height:23px;background:#ffffff;box-shadow:inset -1px -1px #ffffff, inset 1px 1px #808080, inset -2px -2px #d4d0c8, inset 2px 2px #404040"></div>
<div style="left:628px;top:493px;font-family:'Liberation Sans', sans-serif;font-weight:normal;font-size:16px;line-height:30px;color:#000;white-space:nowrap;">2</div>
<div style="left:683px;top:497px;width:20px;height:10px;background:#d4d0c8;box-shadow:inset -1px -1px #404040, inset 1px 1px #d4d0c8, inset -2px -2px #808080, inset 2px 2px #ffffff"></div>
<div style="left:683px;top:507px;width:20px;height:10px;background:#d4d0c8;box-shadow:inset -1px -1px #404040, inset 1px 1px #d4d0c8, inset -2px -2px #808080, inset 2px 2px #ffffff"></div>
<div style="left:692px;top:501px;width:1px;height:1px;background:#000"></div>
<div style="left:691px;top:502px;width:3px;height:1px;background:#000"></div>
<div style="left:691px;top:511px;width:3px;height:1px;background:#000"></div>
<div style="left:692px;top:512px;width:1px;height:1px;background:#000"></div>
<div style="left:706.25px;top:493px;font-family:'Liberation Sans', sans-serif;font-weight:normal;font-size:15.65px;line-height:30px;color:#000;white-space:nowrap;">Max.</div>
<div style="left:742px;top:495px;width:82px;height:24px;background:#ffffff;box-shadow:inset -1px -1px #ffffff, inset 1px 1px #808080, inset -2px -2px #d4d0c8, inset 2px 2px #404040"></div>
<div style="left:747px;top:493px;font-family:'Liberation Sans', sans-serif;font-weight:normal;font-size:16px;line-height:30px;color:#000;white-space:nowrap;">2</div>
<div style="left:803px;top:497px;width:20px;height:11px;background:#d4d0c8;box-shadow:inset -1px -1px #404040, inset 1px 1px #d4d0c8, inset -2px -2px #808080, inset 2px 2px #ffffff"></div>
<div style="left:803px;top:508px;width:20px;height:10px;background:#d4d0c8;box-shadow:inset -1px -1px #404040, inset 1px 1px #d4d0c8, inset -2px -2px #808080, inset 2px 2px #ffffff"></div>
<div style="left:812px;top:501px;width:1px;height:1px;background:#000"></div>
<div style="left:811px;top:502px;width:3px;height:1px;background:#000"></div>
<div style="left:811px;top:512px;width:3px;height:1px;background:#000"></div>
<div style="left:812px;top:513px;width:1px;height:1px;background:#000"></div>
<div style="left:591.47px;top:521px;font-family:'Liberation Sans', sans-serif;font-weight:bold;font-size:16.16px;line-height:30px;color:#000;white-space:nowrap;">Min. Freq.</div>
<div style="left:677.0px;top:522px;font-family:'Liberation Sans', sans-serif;font-weight:bold;font-size:15.68px;line-height:30px;color:#000;white-space:nowrap;">Min. Range</div>
<div style="left:592px;top:551px;width:81px;height:23px;background:#ffffff;box-shadow:inset -1px -1px #ffffff, inset 1px 1px #808080, inset -2px -2px #d4d0c8, inset 2px 2px #404040"></div>
<div style="left:597px;top:549px;font-family:'Liberation Sans', sans-serif;font-weight:normal;font-size:16px;line-height:30px;color:#000;white-space:nowrap;">1</div>
<div style="left:652px;top:553px;width:20px;height:10px;background:#d4d0c8;box-shadow:inset -1px -1px #404040, inset 1px 1px #d4d0c8, inset -2px -2px #808080, inset 2px 2px #ffffff"></div>
<div style="left:652px;top:563px;width:20px;height:10px;background:#d4d0c8;box-shadow:inset -1px -1px #404040, inset 1px 1px #d4d0c8, inset -2px -2px #808080, inset 2px 2px #ffffff"></div>
<div style="left:661px;top:557px;width:1px;height:1px;background:#000"></div>
<div style="left:660px;top:558px;width:3px;height:1px;background:#000"></div>
<div style="left:660px;top:567px;width:3px;height:1px;background:#000"></div>
<div style="left:661px;top:568px;width:1px;height:1px;background:#000"></div>
<div style="left:684px;top:551px;width:82px;height:23px;background:#ffffff;box-shadow:inset -1px -1px #ffffff, inset 1px 1px #808080, inset -2px -2px #d4d0c8, inset 2px 2px #404040"></div>
<div style="left:689px;top:549px;font-family:'Liberation Sans', sans-serif;font-weight:normal;font-size:16px;line-height:30px;color:#000;white-space:nowrap;">1</div>
<div style="left:745px;top:553px;width:20px;height:10px;background:#d4d0c8;box-shadow:inset -1px -1px #404040, inset 1px 1px #d4d0c8, inset -2px -2px #808080, inset 2px 2px #ffffff"></div>
<div style="left:745px;top:563px;width:20px;height:10px;background:#d4d0c8;box-shadow:inset -1px -1px #404040, inset 1px 1px #d4d0c8, inset -2px -2px #808080, inset 2px 2px #ffffff"></div>
<div style="left:754px;top:557px;width:1px;height:1px;background:#000"></div>
<div style="left:753px;top:558px;width:3px;height:1px;background:#000"></div>
<div style="left:753px;top:567px;width:3px;height:1px;background:#000"></div>
<div style="left:754px;top:568px;width:1px;height:1px;background:#000"></div>
<div style="left:843px;top:608px;width:97px;height:27px;background:#d4d0c8;box-shadow:inset -1px -1px #404040, inset 1px 1px #ffffff, inset -2px -2px #808080, inset 2px 2px #d4d0c8"></div>
<div style="left:847.61px;top:607px;font-family:'Liberation Sans', sans-serif;font-weight:normal;font-size:13.86px;line-height:30px;color:#000;white-space:nowrap;">Clone Results</div>
</body></html>
